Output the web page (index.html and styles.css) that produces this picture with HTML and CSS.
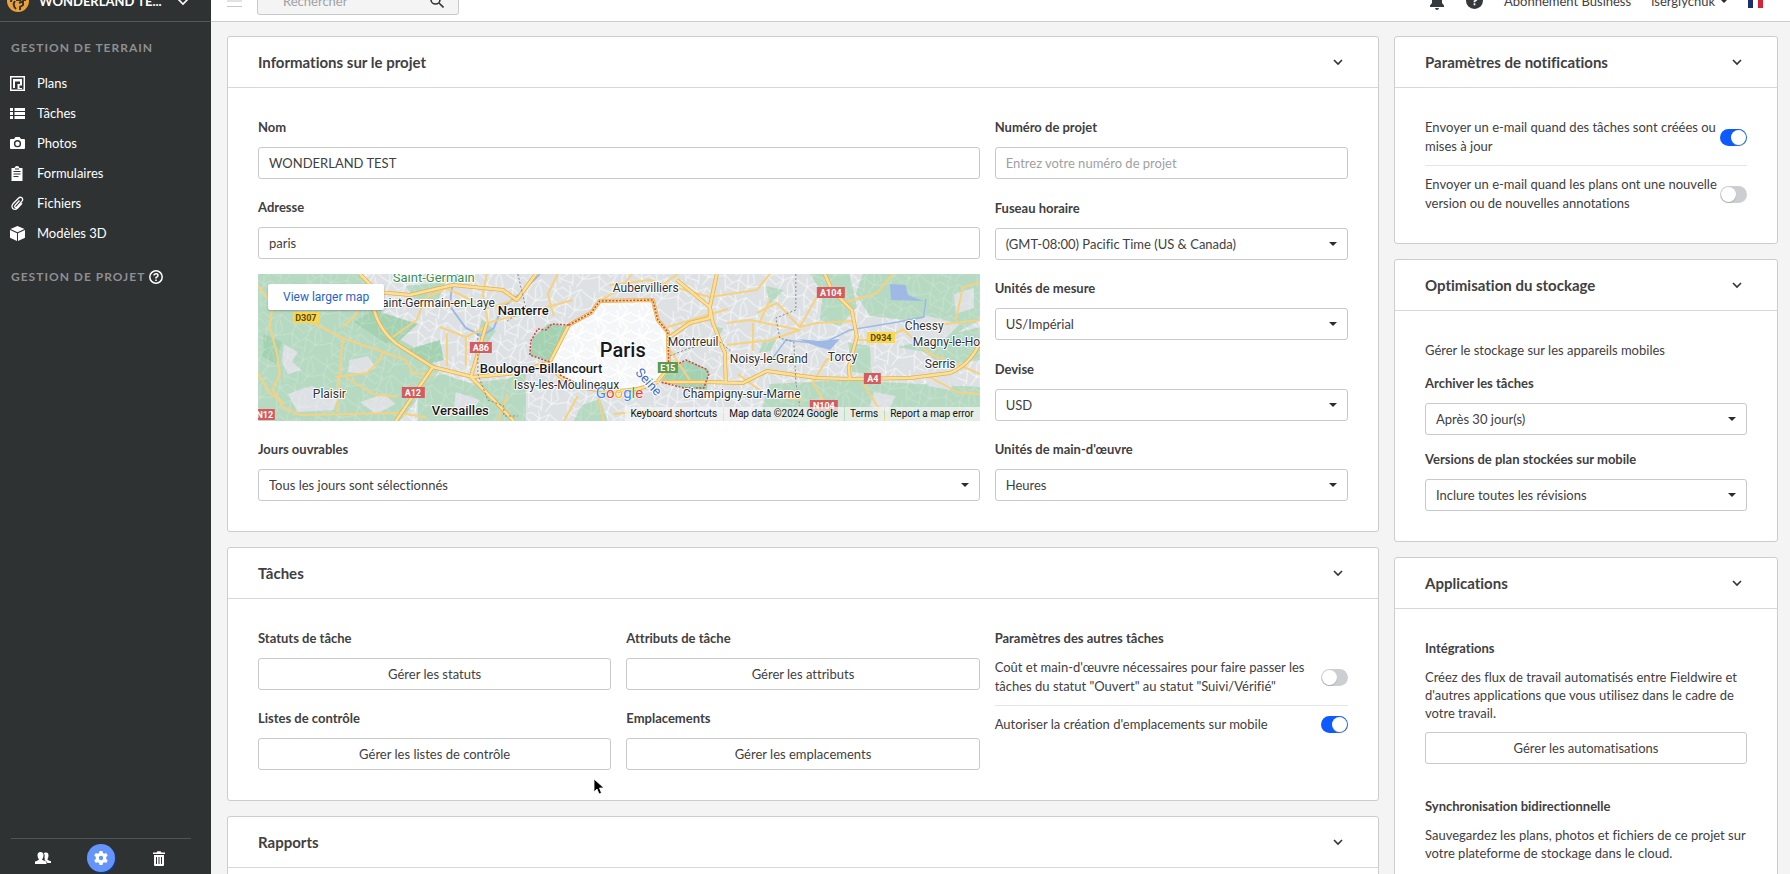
FILE: index.html
```html
<!DOCTYPE html>
<html lang="fr">
<head>
  <meta charset="UTF-8" />
  <title>WONDERLAND TEST</title>
  <link rel="stylesheet" href="styles.css">
</head>
<body>
<div class="app">

  <aside class="sidebar">
    <div class="project">
      <svg class="project-logo" width="22" height="22" viewBox="0 0 22 22">
        <circle cx="11" cy="11" r="11" fill="#e9a13b"/>
        <path d="M4 12q0-5 7-5t7 4M8 11q-3 4 1 8M12 13l4-2v4l-3 2v3M9 10h5" fill="none" stroke="#3a3330" stroke-width="2"/>
      </svg>
      <span class="project-name">WONDERLAND TE...</span>
      <svg width="16" height="10" viewBox="0 0 16 10"><path d="M1 1l7 7 7-7" fill="none" stroke="#fff" stroke-width="1.6"/></svg>
    </div>

    <h2 class="nav-title">GESTION DE TERRAIN</h2>
    <nav class="nav">
      <a href="#plans">
        <svg width="15" height="15" viewBox="0 0 15 15"><rect x=".75" y=".75" width="13.5" height="13.5" fill="none" stroke="#fff" stroke-width="1.5"/><path d="M3 3h9v6.500H9.500V12H12v1H7.500V8h2.500V5.500H5V12H3z" fill="#fff"/></svg>
        Plans
      </a>
      <a href="#taches">
        <svg width="15" height="15" viewBox="0 0 15 15" fill="#fff"><path d="M0 2h3v3H0zM0 6h3v3H0zM0 10h3v3H0zM4.500 2H15v3H4.500zM4.500 6H15v3H4.500zM4.500 10H15v3H4.500z"/></svg>
        Tâches
      </a>
      <a href="#photos">
        <svg width="15" height="15" viewBox="0 0 15 15"><path d="M1 3h3l1.500-2h4L11 3h3q1 0 1 1v8q0 1-1 1H1q-1 0-1-1V4q0-1 1-1z" fill="#fff"/><circle cx="7.500" cy="7.700" r="2.900" fill="none" stroke="#2e3233" stroke-width="1.400"/></svg>
        Photos
      </a>
      <a href="#formulaires">
        <svg width="15" height="15" viewBox="0 0 15 15"><path d="M1.500 2H4.500Q5 0 7 0t2.500 2h3v13h-11z" fill="#fff"/><path d="M3.500 5.500h7M3.500 8h7M3.500 10.500h5M5 3h4" stroke="#2e3233" stroke-width="1.100"/></svg>
        Formulaires
      </a>
      <a href="#fichiers">
        <svg width="15" height="15" viewBox="0 0 15 15"><path d="M9.500 4.500L5 9.500q-.8 1.200.2 1.800 1 .5 1.800-.5l5-5.600q1.400-2-.2-3.400-1.700-1.200-3.400.4L3 7.800q-2 2.500-.2 4.700 2.200 2 4.600-.3l4.600-5" fill="none" stroke="#fff" stroke-width="1.300"/></svg>
        Fichiers
      </a>
      <a href="#modeles">
        <svg width="15" height="15" viewBox="0 0 15 15" fill="#fff"><path d="M7.500 0L14.500 3 7.500 6.300.500 3zM0 4l7 3.300V15L0 11.800zM15 4L8 7.300V15l7-3.200z"/></svg>
        Modèles 3D
      </a>
    </nav>

    <h2 class="nav-title">GESTION DE PROJET
      <svg width="14" height="14" viewBox="0 0 14 14" fill="none" stroke="#fff" stroke-width="1.500"><circle cx="7" cy="7" r="6.200"/><path d="M5 5.600Q5 3.700 7 3.700t2 1.700Q9 6.600 7 7.500v1M7 9.600v1.400"/></svg>
    </h2>

    <div class="sidebar-foot">
      <button type="button" aria-label="Membres">
        <svg width="16" height="12" viewBox="0 0 16 12" fill="#fff"><path d="M10.500.5Q13.500 0 13.500 3.500 13.500 6 12.300 7.200q.2 1 3.700 2V11h-3.500q-.5-2-3-2.700.8-1.500 0-2.300Q10.500 3 8.800 1.200 9.500.5 10.500.5zM5.500 0Q8.700 0 8.500 3.500 8.400 6 7 7.200q0 1 4.500 2.300V12H0V9.500Q4 8.200 4 7.200 2.600 6 2.500 3.500 2.400 0 5.500 0z"/></svg>
      </button>
      <button type="button" class="current" aria-label="Réglages">
        <svg width="14" height="14" viewBox="0 0 14 14"><path d="M5.500 0h3l.4 2 1.300.7 2-.7L13.700 4.600 12.200 6v2l1.500 1.400-1.500 2.600-2-.7-1.300.7-.4 2h-3l-.4-2-1.300-.7-2 .7L.3 9.400 1.800 8V6L.3 4.600 1.800 2l2 .7L5.100 2z" fill="#fff"/><circle cx="7" cy="7" r="2.200" fill="#6594fb"/></svg>
      </button>
      <button type="button" aria-label="Corbeille">
        <svg width="12" height="15" viewBox="0 0 12 15"><path d="M0 1.500h3.500L4.500.3h3l1 1.200H12V3H0zM1 4h10v10q0 1-1 1H2q-1 0-1-1z" fill="#fff"/><path d="M3.500 6v7M6 6v7M8.500 6v7" stroke="#2e3233"/></svg>
      </button>
    </div>
  </aside>

  <div class="page">
    <header class="topbar">
      <svg width="15" height="12" viewBox="0 0 15 12"><path d="M0 .5h15M0 6h15M0 11.500h15" stroke="#c4c6c8"/></svg>
      <div class="search">
        <input type="text" placeholder="Rechercher" aria-label="Rechercher">
        <svg width="14" height="14" viewBox="0 0 14 14" fill="none" stroke="#333" stroke-width="1.600"><circle cx="5.500" cy="5.500" r="4.500"/><path d="M9 9l4.500 4.500"/></svg>
      </div>
      <div class="topbar-right">
        <svg width="16" height="18" viewBox="0 0 16 18" fill="#36393c"><path d="M8 0q1.500 0 1.500 1.700Q13 2.700 13 7v4l2 2.500V15H1v-1.500L3 11V7q0-4.300 3.500-5.300Q6.500 0 8 0zM6 16h4q-.5 2-2 2t-2-2z"/></svg>
        <svg class="help" width="17" height="17" viewBox="0 0 17 17"><circle cx="8.500" cy="8.500" r="8.500" fill="#36393c"/><path d="M6 6.700Q6 4.500 8.500 4.500T11 6.500q0 1.500-2.500 2.700v1M8.500 11.300v1.900" fill="none" stroke="#fff" stroke-width="1.700"/></svg>
        <span>Abonnement Business</span>
        <button type="button" class="user">iserglychuk <i class="caret"></i></button>
        <svg class="flag" width="15" height="15" viewBox="0 0 15 15"><path d="M0 0h5v15H0z" fill="#1c2f6e"/><path d="M5 0h5v15H5z" fill="#fff"/><path d="M10 0h5v15h-5z" fill="#d32536"/></svg>
      </div>
    </header>

    <main class="content">
      <div class="column">

        <section class="card">
          <header class="card-head">
            <h1>Informations sur le projet</h1>
            <svg class="chev" viewBox="0 0 10 6"><path d="M1 1l4 4 4-4"/></svg>
          </header>
          <div class="card-body thirds">
            <div class="stack wide">
              <div class="field">
                <label for="nom">Nom</label>
                <input type="text" id="nom" value="WONDERLAND TEST">
              </div>
              <div class="address">
                <div class="field">
                  <label for="adresse">Adresse</label>
                  <input type="text" id="adresse" value="paris">
                </div>
                <div class="map">
                  <svg class="map-art" viewBox="0 0 722 147" preserveAspectRatio="xMidYMid slice">
                    <defs>
                      <pattern id="streets" width="58" height="46" patternUnits="userSpaceOnUse" patternTransform="rotate(14) scale(.7)">
                        <path d="M0 8l12 4 9-7 14 6 12-9 11 6M0 29l10-5 13 8 8-6 15 7 12-4M9 0l3 12-2 12 6 22M30 0l5 11-4 15 3 20M47 2l-5 14 4 17-6 13M12 12l14 8 9-9M23 32l-7 8 18 2M46 33l8-9-7-14" fill="none" stroke="#fff" stroke-opacity=".8"/>
                      </pattern>
                      <pattern id="blocks" width="22" height="18" patternUnits="userSpaceOnUse">
                        <path d="M0 4l22 9M0 13L22 2M7 0l4 18M17 0l-6 10 7 8" fill="none" stroke="#fff" stroke-width="1.500"/>
                      </pattern>
                    </defs>
                    <rect width="722" height="147" fill="#dde1e4"/>
                    <rect width="722" height="147" fill="url(#streets)"/>

                    <!-- parks and forests -->
                    <g fill="#b6d9c1">
                      <path d="M0 0h104l20 36 14 27 30 17 14 16-12 16-28 35H0z"/>
                      <path d="M182 99l30 10 36-4 20-6v48H160v-26zM148 12l40-4-8 19-20 4zM224 45l14 12-10 14-8-10zM316 147l8-16 18-6 8 22z"/>
                      <path d="M552 0h40l7 33-17 19-20-6 3-26zM605 0h117v46l-36 20-20-18-54-6-14-22zM640 73l82-20v33l-36 6-20-14zM512 110l74-4 136 7v34H500zM508 12l18 4-14 14zM505 68l14-3-6 12-12 2z"/>
                      <path d="M456 52l10 2-6 10zM590 68l22 4 2 28-20-2z"/>
                    </g>
                    <g fill="#a3d1b1">
                      <path d="M96 48l20-12 44 14-20 18-12 1zM148 76l34-10 4 20-16 4zM6 60l18 8-6 22-14-8zM40 12l30 6-16 14z"/>
                      <path d="M275 64l15-14 20 2-19 35-19-6zM414 94l15-8 22 10-2 20-26-3-20-6z"/>
                    </g>
                    <g fill="#dde1e4">
                      <path d="M26 70l14 8-6 10 10 8-14 4-6-12zM92 86l18-4 8 12-14 6-14-2zM30 120l24-8 26 12-4 12-36 2zM102 128l24-8 12 10-20 10zM198 118l24 8-8 12-18-4z"/>
                      <path d="M640 52l30-10 32 8-14 14-30 6zM666 96l36 4-10 16-22-4zM616 118l22 4-8 16-18-6zM696 20l20-6v20l-18 6z"/>
                    </g>
                    <rect width="722" height="147" fill="url(#streets)" opacity=".4"/>

                    <!-- water -->
                    <g fill="none" stroke="#9fb9e6" stroke-width="2">
                      <path d="M282 0l-20 20-18 14-8 20-12 8-16-8-16-22 2-18 6-14"/>
                      <path d="M512 88l16-22 36 4 28-14 48-8 26-5 2-18" stroke-width="1.500"/>
                    </g>
                    <path d="M632 10l16 1 2 10 16 6-33-1zM540 65l22 2 20-2-10 11-14-4z" fill="#9fb9e6"/>

                    <!-- Paris -->
                    <path d="M311 51l22-12 9-12 53-1 5 20 10 12 1 36q-6 14-24 18-30 6-60-1-30-8-35-24z" fill="#f5f6f7"/>
                    <path d="M311 51l22-12 9-12 53-1 5 20 10 12 1 36q-6 14-24 18-30 6-60-1-30-8-35-24z" fill="url(#blocks)"/>

                    <!-- roads, dark casing first -->
                    <g fill="none" stroke-linejoin="round">
                      <g stroke="#f6d17f" stroke-width="2">
                        <path d="M0 12l15 17-3 24 7 26 3 21-7 16 10 17 17 8 97-2 30 4M0 99l12 20 14 10M49 46l36 18 40 14 23 8 7 13 20 2M85 64l-3 32-3 42M85 53l14-13 3-20M77 103l32-4 13-13 3-8M89 104l26 16 24 3M135 63l24-17 6-16M229 49l50-13 36-10M229 0l-4 20 5 28M182 53l26 10 20-10M189 59v33M208 62v30M160 28l28-14 42 20 34-10M300 0l-10 20 6 22M250 120l-10 27M340 122l6 25M320 122l-14 25M356 140l40-4 30 11"/>
                        <path d="M352 11l40-5 60 17 47-7 13-16M499 39l20-10 23 24 17-4 37-2M469 49l23-3 50 10-30 10-43 5M495 49v28M542 53l17-30M585 29l34-10 16-19M599 66h20l27-10 26 24 34 13 16 7M642 56l20-3 60-7M705 13l-7 33M705 13l17-4M605 109l24 38M672 103l27 15 23 2M592 86l-23-1-14 24 10 16v22M432 106l-20-30M420 0l-20 14M374 0l-10 14-22 13M480 100l30 22 36 4M512 26l-10 22M410 53l60-18"/>
                      </g>
                      <g stroke="#e6b04c" stroke-width="4">
                        <path d="M102 0l18 18 32 3 43-10 50 5 14 10 19-26M115 30q4 24 24 40l36 23 40 10 44-4 33-11M175 93l-37 54M229 49l-10 34-6 20 23 23 20 21M311 51l22-12 9-12 53-1 5 20 10 12 1 36-11 13"/>
                        <path d="M412 63l20-14 20-5V33L419 6M459 0l-7 33 3 16 12 30 1 29M405 108l44 0 36 1 24-12 50 7 33 1 60-1 40-5q20-8 30-30M567 0l7 16 20 20 5 27-8 30 1 12M292 88q8 20 35 26 45 8 73-6M311 51l-19 37"/>
                      </g>
                      <g stroke="#fbe09a" stroke-width="2.500">
                        <path d="M102 0l18 18 32 3 43-10 50 5 14 10 19-26M115 30q4 24 24 40l36 23 40 10 44-4 33-11M175 93l-37 54M229 49l-10 34-6 20 23 23 20 21M311 51l22-12 9-12 53-1 5 20 10 12 1 36-11 13"/>
                        <path d="M412 63l20-14 20-5V33L419 6M459 0l-7 33 3 16 12 30 1 29M405 108l44 0 36 1 24-12 50 7 33 1 60-1 40-5q20-8 30-30M567 0l7 16 20 20 5 27-8 30 1 12M292 88q8 20 35 26 45 8 73-6M311 51l-19 37"/>
                      </g>
                      <path d="M311 51l22-12 9-12 53-1 5 20 10 12 1 36M311 51l-17-1-6 6-8-1-7 12-1 14 20 7M412 94l16-8 20 9 3 5-5 14-20 0-23-6M302 101l16 8" stroke="#d2453c" stroke-width="1.500" stroke-dasharray="2 1.500"/>
                      <path d="M538 0v36l-20 8 4 20 14 4 2 40 4 24M260 0l8 34-20 14M220 60v40l10 26 16 6v10h14M412 82l20-8 30-6 12 10" stroke="#85898e" stroke-dasharray="2 2"/>
                    </g>

                    <!-- road shields -->
                    <g class="shield">
                      <g fill="#d45c5e">
                        <rect x="212" y="68" width="22" height="11"/><rect x="144" y="113" width="23" height="11"/><rect y="135" width="17" height="11"/>
                        <rect x="559" y="13" width="28" height="11"/><rect x="606" y="99" width="17" height="11"/><rect x="552" y="126" width="28" height="11"/>
                      </g>
                      <rect x="400" y="88" width="20" height="11" fill="#5f9a4c"/>
                      <rect x="35" y="38" width="27" height="11" fill="#fbd74b"/><rect x="609" y="58" width="28" height="11" fill="#fbd74b"/>
                      <g fill="#fff">
                        <text x="223" y="77">A86</text><text x="155" y="122">A12</text><text x="7" y="144">N12</text><text x="573" y="22">A104</text>
                        <text x="615" y="108">A4</text><text x="566" y="135">N104</text><text x="410" y="97">E15</text>
                      </g>
                      <g fill="#5b4a10"><text x="48" y="47">D307</text><text x="623" y="67">D934</text></g>
                    </g>

                    <g class="place">
                      <text x="117" y="33">Saint-Germain-en-Laye</text>
                      <text x="55" y="124">Plaisir</text>
                      <text x="256" y="115">Issy-les-Moulineaux</text>
                      <text x="355" y="18">Aubervilliers</text>
                      <text x="410" y="72">Montreuil</text>
                      <text x="472" y="89">Noisy-le-Grand</text>
                      <text x="570" y="87">Torcy</text>
                      <text x="425" y="124">Champigny-sur-Marne</text>
                      <text x="647" y="56">Chessy</text>
                      <text x="655" y="72">Magny-le-Hongre</text>
                      <text x="667" y="94">Serris</text>
                      <text class="forest" x="135" y="8">Saint-Germain</text>
                      <g class="town">
                        <text x="240" y="41">Nanterre</text>
                        <text x="222" y="99">Boulogne-Billancourt</text>
                        <text x="174" y="141">Versailles</text>
                      </g>
                      <text class="capital" x="342" y="83">Paris</text>
                      <text class="river" transform="translate(377 99) rotate(48)">Seine</text>
                      <text class="google" x="338" y="124"><tspan fill="#4285f4">G</tspan><tspan fill="#ea4335">o</tspan><tspan fill="#fbbc05">o</tspan><tspan fill="#4285f4">g</tspan><tspan fill="#34a853">l</tspan><tspan fill="#ea4335">e</tspan></text>
                    </g>
                  </svg>
                  <a class="map-larger" href="#map">View larger map</a>
                  <div class="map-legal">
                    <button type="button">Keyboard shortcuts</button>
                    <span>Map data ©2024 Google</span>
                    <a href="#terms">Terms</a>
                    <a href="#report">Report a map error</a>
                  </div>
                </div>
              </div>
              <div class="field">
                <label for="jours">Jours ouvrables</label>
                <div class="select"><select id="jours"><option>Tous les jours sont sélectionnés</option></select></div>
              </div>
            </div>

            <div class="stack">
              <div class="field">
                <label for="numero">Numéro de projet</label>
                <input type="text" id="numero" placeholder="Entrez votre numéro de projet">
              </div>
              <div class="field">
                <label for="fuseau">Fuseau horaire</label>
                <div class="select"><select id="fuseau"><option>(GMT-08:00) Pacific Time (US &amp; Canada)</option></select></div>
              </div>
              <div class="field">
                <label for="mesure">Unités de mesure</label>
                <div class="select"><select id="mesure"><option>US/Impérial</option></select></div>
              </div>
              <div class="field">
                <label for="devise">Devise</label>
                <div class="select"><select id="devise"><option>USD</option></select></div>
              </div>
              <div class="field">
                <label for="oeuvre">Unités de main-d'œuvre</label>
                <div class="select"><select id="oeuvre"><option>Heures</option></select></div>
              </div>
            </div>
          </div>
        </section>

        <section class="card">
          <header class="card-head">
            <h1>Tâches</h1>
            <svg class="chev" viewBox="0 0 10 6"><path d="M1 1l4 4 4-4"/></svg>
          </header>
          <div class="card-body thirds">
            <div class="stack">
              <div class="field"><h3>Statuts de tâche</h3><button type="button" class="btn">Gérer les statuts</button></div>
              <div class="field"><h3>Listes de contrôle</h3><button type="button" class="btn">Gérer les listes de contrôle</button></div>
            </div>
            <div class="stack">
              <div class="field"><h3>Attributs de tâche</h3><button type="button" class="btn">Gérer les attributs</button></div>
              <div class="field"><h3>Emplacements</h3><button type="button" class="btn">Gérer les emplacements</button></div>
            </div>
            <div class="field">
              <h3>Paramètres des autres tâches</h3>
              <div class="toggles">
                <div class="toggle">
                  <label for="cout">Coût et main-d'œuvre nécessaires pour faire passer les tâches du statut "Ouvert" au statut "Suivi/Vérifié"</label>
                  <input type="checkbox" id="cout">
                </div>
                <div class="toggle">
                  <label for="empl">Autoriser la création d'emplacements sur mobile</label>
                  <input type="checkbox" id="empl" checked>
                </div>
              </div>
            </div>
          </div>
        </section>

        <section class="card">
          <header class="card-head">
            <h1>Rapports</h1>
            <svg class="chev" viewBox="0 0 10 6"><path d="M1 1l4 4 4-4"/></svg>
          </header>
          <div class="card-body"></div>
        </section>
      </div>

      <div class="column">
        <section class="card">
          <header class="card-head">
            <h1>Paramètres de notifications</h1>
            <svg class="chev" viewBox="0 0 10 6"><path d="M1 1l4 4 4-4"/></svg>
          </header>
          <div class="card-body toggles">
            <div class="toggle">
              <label for="mail1">Envoyer un e-mail quand des tâches sont créées ou mises à jour</label>
              <input type="checkbox" id="mail1" checked>
            </div>
            <div class="toggle">
              <label for="mail2">Envoyer un e-mail quand les plans ont une nouvelle version ou de nouvelles annotations</label>
              <input type="checkbox" id="mail2">
            </div>
          </div>
        </section>

        <section class="card">
          <header class="card-head">
            <h1>Optimisation du stockage</h1>
            <svg class="chev" viewBox="0 0 10 6"><path d="M1 1l4 4 4-4"/></svg>
          </header>
          <div class="card-body storage">
            <p>Gérer le stockage sur les appareils mobiles</p>
            <div class="field">
              <label for="archiver">Archiver les tâches</label>
              <div class="select"><select id="archiver"><option>Après 30 jour(s)</option></select></div>
            </div>
            <div class="field">
              <label for="versions">Versions de plan stockées sur mobile</label>
              <div class="select"><select id="versions"><option>Inclure toutes les révisions</option></select></div>
            </div>
          </div>
        </section>

        <section class="card">
          <header class="card-head">
            <h1>Applications</h1>
            <svg class="chev" viewBox="0 0 10 6"><path d="M1 1l4 4 4-4"/></svg>
          </header>
          <div class="card-body apps">
            <div class="field">
              <h3>Intégrations</h3>
              <p>Créez des flux de travail automatisés entre Fieldwire et d'autres applications que vous utilisez dans le cadre de votre travail.</p>
              <button type="button" class="btn">Gérer les automatisations</button>
            </div>
            <div class="field">
              <h3>Synchronisation bidirectionnelle</h3>
              <p>Sauvegardez les plans, photos et fichiers de ce projet sur votre plateforme de stockage dans le cloud.</p>
            </div>
          </div>
        </section>
      </div>
    </main>
  </div>

  <svg class="pointer" width="12" height="18" viewBox="0 0 12 18"><path d="M1 1v13l3-3 2 5 2.500-1-2-5H11z" fill="#000" stroke="#fff" stroke-width=".8"/></svg>
</div>
</body>
</html>
```
FILE: styles.css
```css
* {
  box-sizing: border-box;
}
body {
  margin: 0;
  font-family: Lato, "Liberation Sans", sans-serif;
  font-size: 13px;
  line-height: 18px;
  font-variant-ligatures: none;
  color: #3f4041;
  background: #f4f4f4;
}
h1, h2, h3, p {
  margin: 0;
}
button, input, select {
  font: inherit;
  color: inherit;
}
a {
  color: inherit;
  text-decoration: none;
}
.app {
  display: grid;
  grid-template-columns: 211px 1fr;
  height: 100vh;
  overflow: hidden;
}

/* sidebar */
.sidebar {
  display: flex;
  flex-direction: column;
  min-height: 0;
  background: #2e3233;
  color: #fff;
}
.project {
  display: flex;
  align-items: center;
  flex-shrink: 0;
  height: 42px;
  margin-top: -20px;
  padding: 0 20px 0 7px;
  border-bottom: 1px solid #55595a;
  font-weight: bold;
}
.project-logo {
  margin-right: 10px;
}
.project-name {
  flex: 1;
  white-space: nowrap;
}
.nav-title {
  display: flex;
  align-items: center;
  gap: 4px;
  padding: 0 11px;
  margin-top: 17px;
  font-size: 12px;
  letter-spacing: 1px;
  color: #8d9091;
}
.nav {
  display: flex;
  flex-direction: column;
  margin: 11px 0 3px;
}
.nav a {
  display: flex;
  align-items: center;
  gap: 12px;
  height: 30px;
  padding: 0 10px;
}
.sidebar-foot {
  display: flex;
  align-items: center;
  justify-content: space-between;
  height: 36px;
  margin: auto 20px 0 11px;
  padding: 3px 18px 0;
  border-top: 1px solid #505455;
}
.sidebar-foot button {
  display: flex;
  align-items: center;
  justify-content: center;
  width: 28px;
  height: 28px;
  padding: 0;
  border: 0;
  border-radius: 50%;
  background: none;
}
.sidebar-foot .current {
  background: #6594fb;
  box-shadow: 1px 1px 1px #123b94;
}

/* top bar */
.page {
  display: flex;
  flex-direction: column;
  min-width: 0;
  min-height: 0;
}
.topbar {
  display: flex;
  align-items: center;
  flex-shrink: 0;
  height: 42px;
  margin-top: -20px;
  padding: 0 27px 0 16px;
  background: #fff;
  border-bottom: 1px solid #cbcccd;
}
.search {
  display: flex;
  align-items: center;
  width: 202px;
  height: 28px;
  margin-left: 15px;
  padding: 0 14px 0 25px;
  background: #f4f4f4;
  border: 1px solid #c8c9ca;
  border-radius: 3px;
}
.search input {
  flex: 1;
  min-width: 0;
  padding: 0;
  border: 0;
  background: none;
}
::placeholder {
  color: #a0a1a2;
  opacity: 1;
}
.topbar-right {
  display: flex;
  align-items: center;
  margin-left: auto;
}
.help {
  margin: 0 21px;
}
.user {
  display: flex;
  align-items: center;
  gap: 5px;
  margin: 0 20px;
  padding: 0;
  border: 0;
  background: none;
}
.caret, .select::after {
  border: 4px solid transparent;
  border-top-color: #2b2c2d;
  border-bottom: 0;
}

/* cards */
.content {
  display: grid;
  grid-template-columns: 3fr 1fr;
  align-items: start;
  gap: 15px;
  padding: 14px 12px 14px 16px;
  overflow: hidden;
}
.column {
  display: grid;
  gap: 15px;
  min-width: 0;
}
.card {
  background: #fff;
  border: 1px solid #cbcdd0;
  border-radius: 3px;
}
.card-head {
  display: flex;
  align-items: center;
  justify-content: space-between;
  height: 51px;
  padding: 0 35px 0 30px;
  border-bottom: 1px solid #d6d8da;
}
.card-head h1 {
  font-size: 15px;
}
.chev {
  width: 10px;
  height: 6px;
  overflow: visible;
  fill: none;
  stroke: #333;
  stroke-width: 1.6;
}
.card-body {
  padding: 30px;
}
.thirds {
  display: grid;
  grid-template-columns: repeat(3, minmax(0, 1fr));
  gap: 15px;
}
.wide {
  grid-column: span 2;
}
.stack {
  display: flex;
  flex-direction: column;
  justify-content: space-between;
  gap: 19px;
}

/* form parts */
.field {
  display: flex;
  flex-direction: column;
  gap: 10px;
}
.field > label, h3 {
  font-size: 13px;
  font-weight: bold;
  line-height: 19px;
}
.field input[type="text"], .select select, .btn {
  width: 100%;
  height: 32px;
  padding: 0 10px;
  background: #fff;
  border: 1px solid #c8c9ca;
  border-radius: 3px;
}
.select {
  position: relative;
}
.select select {
  display: block;
  appearance: none;
}
.select::after {
  content: "";
  position: absolute;
  right: 11px;
  top: 14px;
  pointer-events: none;
}
.toggle {
  display: flex;
  align-items: center;
  justify-content: space-between;
  line-height: 19px;
}
.toggle + .toggle {
  margin-top: 9px;
  padding-top: 9px;
  border-top: 1px solid #e4e5e7;
}
.toggle input {
  appearance: none;
  flex-shrink: 0;
  width: 27px;
  height: 17px;
  margin: 0;
  padding: 1px;
  border-radius: 9px;
  background: #cdced2;
}
.toggle input::before {
  content: "";
  display: block;
  width: 15px;
  height: 15px;
  border-radius: 50%;
  background: #fff;
  box-shadow: 0 1px 1px #8888;
}
.toggle input:checked {
  padding-left: 11px;
  background: #0d5bff;
}
/* keeps the wrap of long labels clear of the switch */
.field .toggle label {
  padding-right: 8px;
}
.storage {
  display: grid;
  gap: 15px;
}
.apps {
  display: grid;
  gap: 33px;
}

/* map */
.address {
  display: grid;
  gap: 15px;
}
.map {
  position: relative;
  height: 147px;
  overflow: hidden;
  font-family: Roboto, sans-serif;
}
.map-art {
  display: block;
  width: 100%;
  height: 100%;
}
.place {
  font-size: 12px;
  fill: #2f3236;
  stroke: #fff;
  stroke-width: 2px;
  stroke-linejoin: round;
  paint-order: stroke;
}
.town {
  font-size: 13px;
  font-weight: 500;
  fill: #17191c;
}
.capital {
  font-size: 20px;
  font-weight: 500;
  fill: #17191c;
}
.forest {
  font-size: 13px;
  fill: #3c8e53;
}
.river {
  font-size: 13px;
  fill: #3c6bc4;
}
.google {
  font-size: 15px;
  stroke-width: 1px;
}
.shield {
  font-size: 9px;
  font-weight: bold;
  text-anchor: middle;
}
.map-larger {
  position: absolute;
  left: 10px;
  top: 10px;
  padding: 4px 15px;
  font-size: 12px;
  color: #1f62c9;
  background: #fff;
  border-radius: 2px;
  box-shadow: 0 1px 2px #0004;
}
.map-legal {
  position: absolute;
  right: 0;
  bottom: 0;
  display: flex;
  gap: 1px;
  font-size: 10px;
  line-height: 14px;
  color: #111;
}
.map-legal > * {
  padding: 0 6px 0 5px;
  border: 0;
  background: #f5f5f5b8;
}

.pointer {
  position: absolute;
  left: 593px;
  top: 778px;
}
```
